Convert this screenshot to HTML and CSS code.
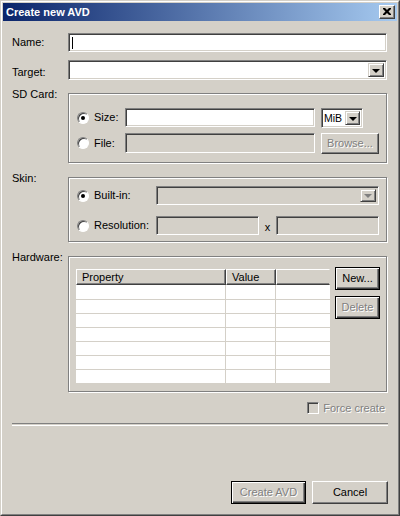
FILE: index.html
```html
<!DOCTYPE html>
<html>
<head>
<meta charset="utf-8">
<link rel="stylesheet" href="styles.css">
</head>
<body>
<div class="window">
  <div class="frame">
    <div class="titlebar">
      <span class="title">Create new AVD</span>
      <span class="close">
        <svg width="8" height="7" viewBox="0 0 8 7"><path d="M0 0h2l2 2 2-2h2v1l-2.5 2.5L8 6v1H6L4 5 2 7H0V6l2.5-2.5L0 1z" fill="#000"/></svg>
      </span>
    </div>
    <div class="content">
      <div class="form">
        <div class="label">Name:</div>
        <div class="field sunken white"><span class="caret"></span></div>

        <div class="label">Target:</div>
        <div class="field sunken white combo"><span class="dd"><span class="tri"></span></span></div>

        <div class="label glabel">SD Card:</div>
        <div class="group sd">
          <div class="opt"><span class="radio on"></span><span>Size:</span></div>
          <div class="sunken white box19"></div>
          <div class="sunken white mib side"><span class="mibtxt">MiB</span><span class="dd small"><span class="tri"></span></span></div>

          <div class="opt"><span class="radio"></span><span>File:</span></div>
          <div class="sunken grey box20"></div>
          <div class="btn disabled browse side"><span class="dis">Browse...</span></div>
        </div>

        <div class="label glabel">Skin:</div>
        <div class="group skin">
          <div class="opt"><span class="radio on"></span><span>Built-in:</span></div>
          <div class="sunken grey box19 combo wide"><span class="dd"><span class="tri dtri"></span></span></div>

          <div class="opt"><span class="radio"></span><span>Resolution:</span></div>
          <div class="res">
            <div class="sunken grey box19 rin"></div>
            <span class="xsep">x</span>
            <div class="sunken grey box19 rin"></div>
          </div>
        </div>

        <div class="label glabel">Hardware:</div>
        <div class="group hw">
          <div class="table">
            <div class="thead">
              <div class="th c1">Property</div>
              <div class="th c2">Value</div>
              <div class="th c3"></div>
            </div>
            <div class="tbody">
              <div class="tr"><div class="td c1"></div><div class="td c2"></div><div class="td c3"></div></div>
              <div class="tr"><div class="td c1"></div><div class="td c2"></div><div class="td c3"></div></div>
              <div class="tr"><div class="td c1"></div><div class="td c2"></div><div class="td c3"></div></div>
              <div class="tr"><div class="td c1"></div><div class="td c2"></div><div class="td c3"></div></div>
              <div class="tr"><div class="td c1"></div><div class="td c2"></div><div class="td c3"></div></div>
              <div class="tr"><div class="td c1"></div><div class="td c2"></div><div class="td c3"></div></div>
              <div class="tr"><div class="td c1"></div><div class="td c2"></div><div class="td c3"></div></div>
            </div>
          </div>
          <div class="sidebtns">
            <div class="btn framed"><span>New...</span></div>
            <div class="btn framed disabled"><span class="dis">Delete</span></div>
          </div>
        </div>
      </div>

      <div class="force">
        <span class="check"></span>
        <span class="dis">Force create</span>
      </div>

      <div class="separator"></div>

      <div class="actions">
        <div class="btn framed disabled big"><span class="dis">Create AVD</span></div>
        <div class="btn big"><span>Cancel</span></div>
      </div>
    </div>
  </div>
</div>
</body>
</html>
```
FILE: styles.css
```css
html, body {
  margin: 0;
  padding: 0;
  background: #d4d0c8;
}
body {
  font-family: "Liberation Sans", Arial, sans-serif;
  font-size: 11px;
  line-height: 13px;
  color: #000;
}
.window {
  width: 400px;
  height: 516px;
  box-sizing: border-box;
  border: 1px solid;
  border-color: #d4d0c8 #404040 #404040 #d4d0c8;
  background: #d4d0c8;
}
.frame {
  height: 100%;
  box-sizing: border-box;
  border: 1px solid;
  border-color: #fff #808080 #808080 #fff;
  padding: 1px;
  display: flex;
  flex-direction: column;
}
.titlebar {
  height: 18px;
  flex: none;
  background: linear-gradient(to right, #0a246a, #a6caf0);
  display: flex;
  align-items: center;
  justify-content: space-between;
  padding: 0 2px 0 3px;
}
.title {
  color: #fff;
  font-weight: bold;
  font-size: 11px;
}
.close {
  width: 16px;
  height: 14px;
  box-sizing: border-box;
  background: #d4d0c8;
  border: 1px solid;
  border-color: #fff #404040 #404040 #fff;
  box-shadow: inset -1px -1px #808080;
  display: flex;
  align-items: center;
  justify-content: center;
  padding: 0 1px 1px 0;
}
.close svg { display: block; }

.content {
  flex: 1;
  padding: 12px 9px 0 9px;
  display: flex;
  flex-direction: column;
}
.form {
  display: grid;
  grid-template-columns: 56px 319px;
  row-gap: 8px;
}
.label {
  display: flex;
  align-items: center;
}
.glabel {
  align-items: flex-start;
  margin-top: -5px;
}
.sunken {
  box-sizing: border-box;
  border: 1px solid;
  border-color: #808080 #fff #fff #808080;
  box-shadow: inset 1px 1px #404040, inset -1px -1px #d4d0c8;
  position: relative;
}
.white { background: #fff; }
.grey { background: #d4d0c8; }
.field { height: 19px; }
.field.combo { height: 20px; margin-bottom: 5px; }
.caret {
  position: absolute;
  left: 3px;
  top: 3px;
  width: 1px;
  height: 12px;
  background: #000;
}
.dd {
  position: absolute;
  right: 2px;
  top: 2px;
  bottom: 2px;
  width: 16px;
  box-sizing: border-box;
  background: #d4d0c8;
  border: 1px solid;
  border-color: #d4d0c8 #404040 #404040 #d4d0c8;
  box-shadow: inset 1px 1px #fff, inset -1px -1px #808080;
  display: flex;
  align-items: center;
  justify-content: center;
}
.dd.small { width: 15px; }
.tri {
  width: 0;
  height: 0;
  border-left: 4px solid transparent;
  border-right: 4px solid transparent;
  border-top: 4px solid #000;
  margin-top: 1px;
}
.dtri {
  border-top-color: #808080;
}

.group {
  box-sizing: border-box;
  border: 1px solid #808080;
  box-shadow: inset 1px 1px #fff, 1px 1px #fff;
}
.group.sd {
  height: 70px;
  margin-bottom: 6px;
  padding: 14px 7px 0 8px;
  display: grid;
  grid-template-columns: 48px 190px 64px;
  grid-template-rows: 19px 20px;
  column-gap: 0;
  row-gap: 6px;
}
.side {
  margin-left: 6px;
}
.opt {
  display: flex;
  align-items: center;
  gap: 5px;
}
.radio {
  width: 12px;
  height: 12px;
  box-sizing: border-box;
  border-radius: 50%;
  background: #fff;
  border: 1px solid;
  border-color: #808080 #fff #fff #808080;
  box-shadow: inset 1px 1px #404040;
  position: relative;
  flex: none;
}
.radio.on::after {
  content: "";
  position: absolute;
  left: 3px;
  top: 3px;
  width: 4px;
  height: 4px;
  border-radius: 50%;
  background: #000;
}
.box19 { height: 19px; }
.box20 { height: 20px; }
.mib {
  width: 42px;
  height: 20px;
}
.mibtxt {
  position: absolute;
  left: 2px;
  top: 3px;
  font-size: 10.5px;
}
.btn {
  box-sizing: border-box;
  background: #d4d0c8;
  border: 1px solid;
  border-color: #fff #404040 #404040 #fff;
  box-shadow: inset -1px -1px #808080;
  display: flex;
  align-items: center;
  justify-content: center;
}
.btn.framed {
  border: 1px solid #000;
  box-shadow: inset 1px 1px #fff, inset -1px -1px #404040, inset -2px -2px #808080;
}
.browse {
  height: 21px;
}
.dis {
  color: #808080;
  text-shadow: 1px 1px #fff;
}

.group.skin {
  height: 65px;
  margin-bottom: 6px;
  padding: 8px 7px 0 8px;
  display: grid;
  grid-template-columns: 74px 223px;
  grid-template-rows: 19px 19px;
  column-gap: 5px;
  row-gap: 11px;
}
.res {
  display: flex;
  align-items: center;
}
.rin { width: 103px; }
.xsep {
  width: 17px;
  text-align: center;
  padding-top: 4px;
}

.group.hw {
  height: 136px;
  padding: 12px 7px 0 7px;
  display: flex;
  gap: 5px;
  align-items: flex-start;
}
.table {
  width: 254px;
  background: #fff;
  border-bottom: 1px solid #d4d0c8;
}
.thead {
  display: flex;
  height: 16px;
  background: #d4d0c8;
}
.th {
  box-sizing: border-box;
  height: 16px;
  border: 1px solid;
  border-color: #fff #404040 #404040 #fff;
  box-shadow: inset -1px -1px #808080;
  padding: 1px 0 0 5px;
  line-height: 12px;
}
.c1 { width: 150px; }
.c2 { width: 50px; }
.c3 { width: 54px; }
.th.c3 { border-right-color: #d4d0c8; box-shadow: inset 0 -1px #808080; }
.tr {
  display: flex;
  height: 14px;
  box-sizing: border-box;
  border-top: 1px solid #d4d0c8;
}
.tr:first-child { border-top: none; }
.td {
  box-sizing: border-box;
  height: 100%;
  border-right: 1px solid #d4d0c8;
}
.td.c3 { border-right: none; }
.sidebtns {
  display: flex;
  flex-direction: column;
  gap: 6px;
  margin-top: -2px;
}
.sidebtns .btn {
  width: 45px;
  height: 23px;
}

.force {
  display: flex;
  justify-content: flex-end;
  align-items: center;
  gap: 4px;
  margin-top: 10px;
  padding-right: 3px;
  height: 12px;
}
.check {
  width: 12px;
  height: 12px;
  box-sizing: border-box;
  background: #d4d0c8;
  border: 1px solid;
  border-color: #808080 #fff #fff #808080;
  box-shadow: inset 1px 1px #404040;
}
.separator {
  margin-top: 9px;
  height: 1px;
  margin-right: 0;
  width: 376px;
  border-top: 1px solid #808080;
  border-bottom: 1px solid #fff;
}
.actions {
  margin-top: 55px;
  display: flex;
  justify-content: flex-end;
  gap: 6px;
  padding-right: 0;
  width: 376px;
}
.btn.big {
  width: 76px;
  height: 23px;
}
.btn.big.framed { width: 75px; }
```
